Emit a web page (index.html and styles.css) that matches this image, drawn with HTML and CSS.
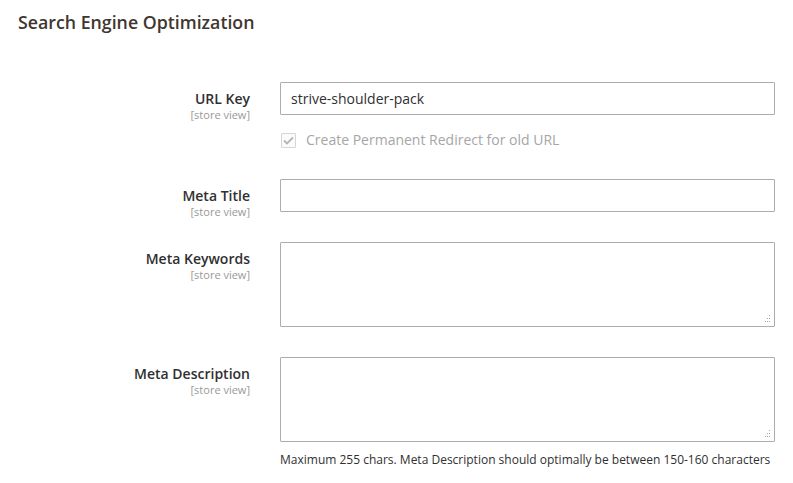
FILE: index.html
```html
<!DOCTYPE html>
<html>
<head>
<meta charset="utf-8">
<link rel="stylesheet" href="styles.css">
</head>
<body>
<div class="page">
  <h2 class="section-title">Search Engine Optimization</h2>
  <div class="fieldset">
    <div class="field">
      <div class="label"><span class="name">URL Key</span><span class="scope">[store view]</span></div>
      <div class="control">
        <input class="input" type="text" value="strive-shoulder-pack">
        <label class="check">
          <span class="box"><svg width="11" height="9" viewBox="0 0 11 9"><path d="M1 4.5 L4 7.5 L10 1.5" fill="none" stroke="#b5b5b5" stroke-width="1.8"/></svg></span>
          <span class="check-text">Create Permanent Redirect for old URL</span>
        </label>
      </div>
    </div>
    <div class="field">
      <div class="label"><span class="name">Meta Title</span><span class="scope">[store view]</span></div>
      <div class="control">
        <input class="input" type="text" value="">
      </div>
    </div>
    <div class="field">
      <div class="label"><span class="name">Meta Keywords</span><span class="scope">[store view]</span></div>
      <div class="control">
        <div class="ta-wrap">
          <textarea class="textarea"></textarea>
          <svg class="grip" width="7" height="9" viewBox="0 0 7 9"><g fill="#a8a8a8"><rect x="5" y="0" width="1" height="1"/><rect x="5" y="3" width="1" height="1"/><rect x="3" y="3" width="1" height="1"/><rect x="1" y="6" width="1" height="1"/><rect x="3" y="6" width="1" height="1"/><rect x="5" y="6" width="1" height="1"/></g></svg>
        </div>
      </div>
    </div>
    <div class="field">
      <div class="label"><span class="name">Meta Description</span><span class="scope">[store view]</span></div>
      <div class="control">
        <div class="ta-wrap">
          <textarea class="textarea"></textarea>
          <svg class="grip" width="7" height="9" viewBox="0 0 7 9"><g fill="#a8a8a8"><rect x="5" y="0" width="1" height="1"/><rect x="5" y="3" width="1" height="1"/><rect x="3" y="3" width="1" height="1"/><rect x="1" y="6" width="1" height="1"/><rect x="3" y="6" width="1" height="1"/><rect x="5" y="6" width="1" height="1"/></g></svg>
        </div>
        <div class="note">Maximum 255 chars. Meta Description should optimally be between 150-160 characters</div>
      </div>
    </div>
  </div>
</div>
</body>
</html>
```

FILE: styles.css
```css
* { box-sizing: border-box; }
html, body { margin: 0; padding: 0; background: #fff; }
body { font-family: "Open Sans", "Liberation Sans", sans-serif; color: #303030; }
.page { width: 793px; height: 483px; overflow: hidden; }
.section-title {
  margin: 0;
  padding: 10px 18px 0 18px;
  font-size: 17.75px;
  font-weight: 600;
  line-height: 24px;
  color: #41362f;
}
.fieldset { padding: 48px 18px 0 0; }
.field {
  display: grid;
  grid-template-columns: 250px 1fr;
  column-gap: 30px;
  margin-bottom: 30px;
}
.label {
  display: flex;
  flex-direction: column;
  align-items: flex-end;
  text-align: right;
  padding-top: 7px;
  height: 33px;
}
.name { font-size: 14px; font-weight: 600; line-height: 19px; color: #303030; }
.scope { font-size: 11px; line-height: 13px; color: #999; }
.control { display: flex; flex-direction: column; }
.input {
  display: block;
  width: 100%;
  height: 33px;
  margin: 0;
  padding: 0 10px;
  border: 1px solid #adadad;
  border-radius: 1px;
  font-family: inherit;
  font-size: 14px;
  color: #303030;
  background: #fff;
  outline: none;
}
.check {
  display: flex;
  align-items: center;
  gap: 10px;
  margin-top: 16px;
  margin-left: 1px;
  height: 18px;
}
.box {
  width: 15px; height: 15px;
  border: 1px solid #d6d6d6;
  border-radius: 1px;
  display: flex; align-items: center; justify-content: center;
  background: #fbfbfb;
}
.check-text { font-size: 14px; color: #a6a6a6; line-height: 18px; }
.ta-wrap { position: relative; }
.textarea {
  display: block;
  width: 100%;
  height: 85px;
  margin: 0;
  padding: 6px 10px;
  border: 1px solid #adadad;
  border-radius: 1px;
  font-family: inherit;
  font-size: 14px;
  resize: none;
  outline: none;
}
.grip { position: absolute; right: 4px; bottom: 3px; }
.note { margin-top: 10px; font-size: 12px; line-height: 16px; color: #303030; }
```
